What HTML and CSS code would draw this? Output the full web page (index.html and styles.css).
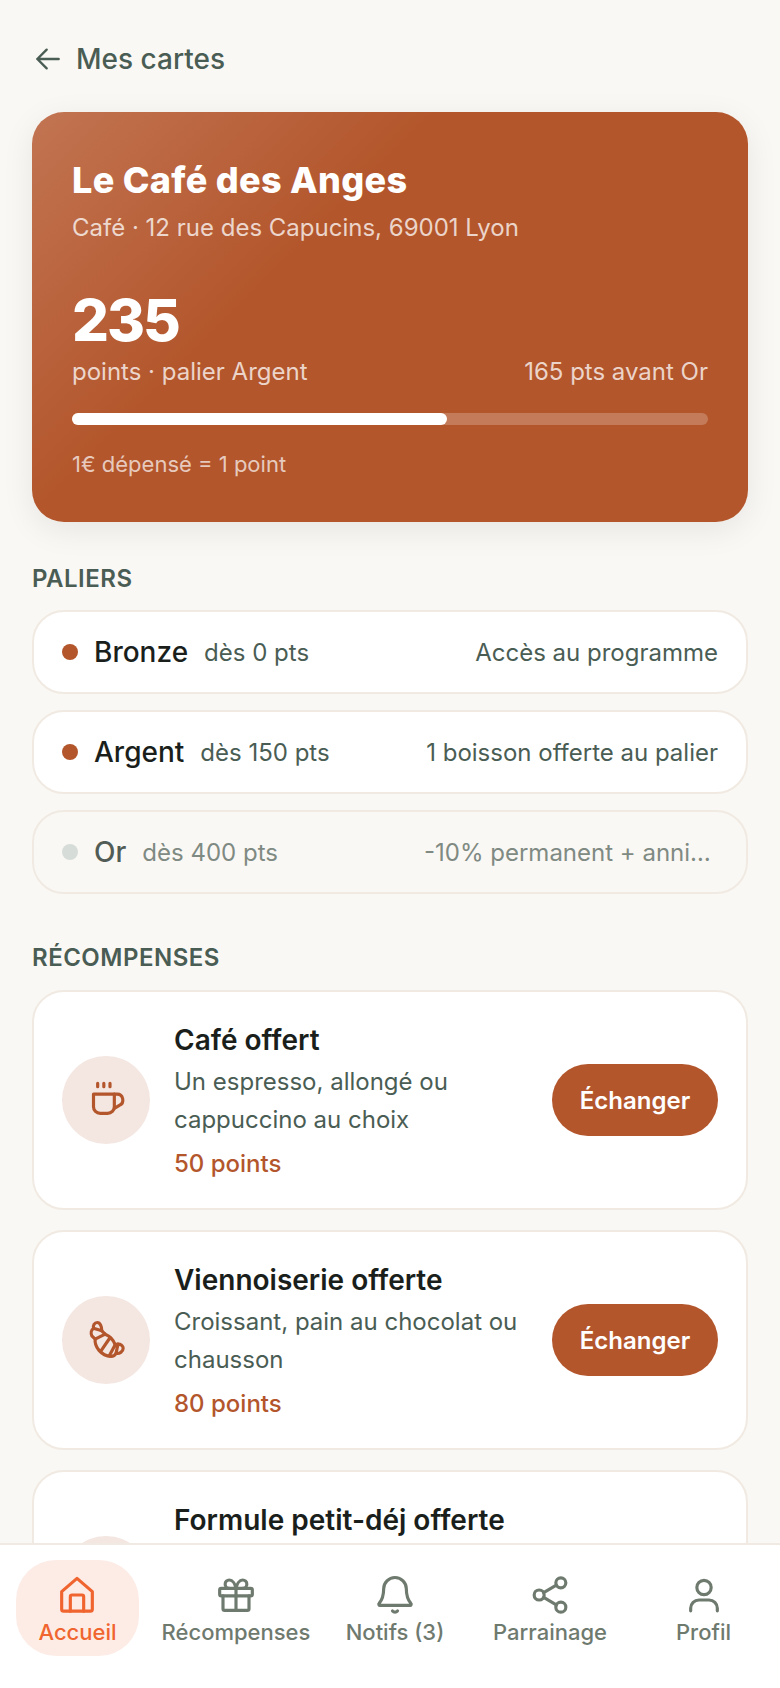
FILE: index.html
```html
<!DOCTYPE html>
<html lang="fr">
<head>
  <meta charset="UTF-8">
  <meta name="viewport" content="width=device-width, initial-scale=1.0">
  <title>Mes cartes</title>
  <link rel="stylesheet" href="styles.css">
</head>
<body>
  <div class="app">
    <main class="content">
      <header class="top-bar">
        <svg class="back-icon" viewBox="0 0 24 24"><path d="M20 12H4M11 5l-7 7 7 7"/></svg>
        <h1>Mes cartes</h1>
      </header>

      <section class="hero">
        <h2>Le Café des Anges</h2>
        <p class="hero-sub">Café · 12 rue des Capucins, 69001 Lyon</p>
        <div class="hero-points">235</div>
        <div class="hero-row">
          <span>points · palier Argent</span>
          <span>165 pts avant Or</span>
        </div>
        <div class="progress"><div class="progress-fill" style="width: 59%"></div></div>
        <p class="hero-rule">1€ dépensé = 1 point</p>
      </section>

      <h3 class="section-title">PALIERS</h3>
      <ul class="tiers">
        <li class="tier">
          <span class="dot"></span>
          <span class="tier-name">Bronze</span>
          <span class="tier-min">dès 0 pts</span>
          <span class="tier-perk">Accès au programme</span>
        </li>
        <li class="tier">
          <span class="dot"></span>
          <span class="tier-name">Argent</span>
          <span class="tier-min">dès 150 pts</span>
          <span class="tier-perk">1 boisson offerte au palier</span>
        </li>
        <li class="tier tier-locked">
          <span class="dot"></span>
          <span class="tier-name">Or</span>
          <span class="tier-min">dès 400 pts</span>
          <span class="tier-perk">-10% permanent + anniversaire</span>
        </li>
      </ul>

      <h3 class="section-title section-title-rewards">RÉCOMPENSES</h3>
      <div class="rewards">
        <article class="reward">
          <div class="reward-icon">
            <svg viewBox="0 0 24 24">
              <path d="M7 2v2M10.7 2v2M14.4 2v2"/>
              <path d="M4.5 8.5H17V16a4 4 0 0 1-4 4H8.5a4 4 0 0 1-4-4Z"/>
              <path d="M17 8.5h1.5a3.5 3.5 0 0 1 1.5 6.7L17 17"/>
            </svg>
          </div>
          <div class="reward-text">
            <h4>Café offert</h4>
            <p>Un espresso, allongé ou cappuccino au choix</p>
            <span class="reward-cost">50 points</span>
          </div>
          <button class="swap-btn">Échanger</button>
        </article>

        <article class="reward">
          <div class="reward-icon">
            <svg viewBox="0 0 24 24">
              <path d="M6.8 1.5C5 1.5 4.2 3.2 4.5 5 3 6 2.8 8 3.5 9.5l2 2C5 16 9 21.5 15 21.8c1.5 0 2.5-.8 3-1.800 2 .5 4.3-1 4.3-3 0-1.500-1.500-2.500-3.100-2.500l-1.700.3c-1-2.800-3.500-5.300-6-6.300l-2-2C9.500 4 8.500 1.500 6.800 1.500Z"/>
              <path d="M4.500 5c1.500.5 3.500 1 5 1.500M5.500 11.500l6-3M9 18.500l5.500-8M14 21.500l3.500-6.700M18 20l1.200-5.500"/>
            </svg>
          </div>
          <div class="reward-text">
            <h4>Viennoiserie offerte</h4>
            <p>Croissant, pain au chocolat ou chausson</p>
            <span class="reward-cost">80 points</span>
          </div>
          <button class="swap-btn">Échanger</button>
        </article>

        <article class="reward">
          <div class="reward-icon"></div>
          <div class="reward-text">
            <h4>Formule petit-déj offerte</h4>
            <p>Boisson chaude, jus et viennoiserie</p>
            <span class="reward-cost">150 points</span>
          </div>
          <button class="swap-btn">Échanger</button>
        </article>
      </div>
    </main>

    <nav class="bottom-nav">
      <a class="nav-item active">
        <svg viewBox="0 0 24 24">
          <path d="M12 2l9.200 8v10.500a1.200 1.200 0 0 1-1.200 1.200H4a1.200 1.200 0 0 1-1.200-1.200V10Z"/>
          <path d="M8 21.700V13a1 1 0 0 1 1-1h6a1 1 0 0 1 1 1v8.700"/>
        </svg>
        <span>Accueil</span>
      </a>
      <a class="nav-item">
        <svg viewBox="0 0 24 24">
          <rect x="2.200" y="8" width="19.600" height="4.500" rx="1"/>
          <path d="M4.200 12.500v7.700a1 1 0 0 0 1 1h13.600a1 1 0 0 0 1-1v-7.700M12 8v13.200"/>
          <path d="M12 8C11.500 5.500 10 3 8 3a2.500 2.500 0 0 0 0 5M12 8c.5-2.500 2-5 4-5a2.500 2.500 0 0 1 0 5"/>
        </svg>
        <span>Récompenses</span>
      </a>
      <a class="nav-item">
        <svg viewBox="0 0 24 24">
          <path d="M12 1.500a6.800 6.800 0 0 0-6.800 6.800c0 4.700-1.200 7-2.700 8.700a.7.7 0 0 0 .6 1.200h17.800a.7.7 0 0 0 .6-1.200c-1.500-1.700-2.700-4-2.700-8.700A6.800 6.800 0 0 0 12 1.500Z"/>
          <path d="M10.500 21.600c.8.900 2.200.9 3 0"/>
        </svg>
        <span>Notifs (3)</span>
      </a>
      <a class="nav-item">
        <svg viewBox="0 0 24 24">
          <circle cx="18.500" cy="4.700" r="3"/>
          <circle cx="5.500" cy="12" r="3"/>
          <circle cx="18.500" cy="19.300" r="3"/>
          <path d="M8.200 10.600l7.600-4.500M8.200 13.400l7.600 4.500"/>
        </svg>
        <span>Parrainage</span>
      </a>
      <a class="nav-item">
        <svg viewBox="0 0 24 24">
          <circle cx="12" cy="7.500" r="4.300"/>
          <path d="M4 21.500V20a5 5 0 0 1 5-5h6a5 5 0 0 1 5 5v1.500"/>
        </svg>
        <span>Profil</span>
      </a>
    </nav>
  </div>
</body>
</html>
```

FILE: styles.css
```css
* {
  margin: 0;
  padding: 0;
  box-sizing: border-box;
}

body {
  font-family: Inter, "Liberation Sans", sans-serif;
  background-color: #faf8f4;
  color: #1a1f1c;
}

svg {
  fill: none;
  stroke: currentColor;
  stroke-width: 1.5;
  stroke-linecap: round;
  stroke-linejoin: round;
}

.app {
  height: 100vh;
  display: flex;
  flex-direction: column;
  overflow: hidden;
}

.content {
  flex: 1;
  min-height: 0;
  overflow: hidden;
  padding: 39px 32px 0;
}

.top-bar {
  display: flex;
  align-items: center;
  gap: 12px;
  height: 40px;
  margin-bottom: 33px;
  color: #4a5d54;
}

.back-icon {
  width: 32px;
  height: 32px;
  stroke-width: 1.8;
}

.top-bar h1 {
  font-size: 28px;
  font-weight: 500;
}

.hero {
  height: 410px;
  padding: 46px 40px 0;
  border-radius: 32px;
  color: #fff;
  background: linear-gradient(135deg, #c27452 0%, #b3562c 36%, #b3562c 100%);
  box-shadow: 0 8px 32px rgba(0, 0, 0, 0.08);
}

.hero h2 {
  font-size: 36px;
  font-weight: 800;
  line-height: 44px;
  letter-spacing: 0.3px;
}

.hero-sub {
  margin-top: 9px;
  font-size: 24px;
  line-height: 34px;
  color: rgba(255, 255, 255, 0.75);
}

.hero-points {
  margin-top: 40px;
  font-size: 58px;
  font-weight: 800;
  line-height: 71px;
  letter-spacing: -2px;
}

.hero-row {
  display: flex;
  justify-content: space-between;
  font-size: 24px;
  line-height: 32px;
  color: rgba(255, 255, 255, 0.75);
}

.progress {
  height: 12px;
  margin-top: 25px;
  border-radius: 6px;
  background-color: rgba(255, 255, 255, 0.22);
}

.progress-fill {
  height: 100%;
  border-radius: 6px;
  background-color: #fff;
}

.hero-rule {
  margin-top: 23px;
  font-size: 22px;
  line-height: 32px;
  color: rgba(255, 255, 255, 0.7);
}

.section-title {
  margin-top: 43px;
  margin-bottom: 17px;
  font-size: 24px;
  font-weight: 600;
  line-height: 28px;
  letter-spacing: 0.5px;
  color: #4a5d54;
}

.section-title-rewards {
  margin-top: 50px;
  margin-bottom: 18px;
}

.tiers {
  list-style: none;
  display: flex;
  flex-direction: column;
  gap: 16px;
}

.tier {
  display: flex;
  align-items: center;
  height: 84px;
  padding: 0 28px;
  background-color: #fff;
  border: 2px solid #f0eae2;
  border-radius: 32px;
}

.dot {
  flex: none;
  width: 16px;
  height: 16px;
  border-radius: 50%;
  background-color: #b3562c;
}

.tier-name {
  margin-left: 16px;
  font-size: 28px;
  font-weight: 500;
}

.tier-min {
  margin-left: 16px;
  font-size: 24px;
  color: #4a5d54;
  white-space: nowrap;
}

.tier-perk {
  max-width: 294px;
  margin-left: auto;
  font-size: 24px;
  text-align: right;
  color: #4a5d54;
  white-space: nowrap;
  overflow: hidden;
  text-overflow: ellipsis;
}

.tier-locked {
  background-color: transparent;
  color: #525c56;
}

.tier-locked .dot {
  background-color: #d6dcd8;
}

.tier-locked .tier-min,
.tier-locked .tier-perk {
  color: #7f8a83;
}

.rewards {
  display: flex;
  flex-direction: column;
  gap: 20px;
}

.reward {
  flex: none;
  display: flex;
  align-items: center;
  height: 220px;
  padding: 0 28px;
  background-color: #fff;
  border: 2px solid #f0eae2;
  border-radius: 32px;
}

.reward-icon {
  flex: none;
  display: flex;
  align-items: center;
  justify-content: center;
  width: 88px;
  height: 88px;
  border-radius: 50%;
  background-color: #f4e6e1;
  color: #b3562c;
}

.reward-icon svg {
  width: 40px;
  height: 40px;
  stroke-width: 1.9;
}

.reward-text {
  flex: 1;
  min-width: 0;
  padding: 4px 24px 0;
}

.reward-text h4 {
  margin-bottom: 5px;
  font-size: 28px;
  font-weight: 600;
  line-height: 36px;
}

.reward-text p {
  font-size: 24px;
  line-height: 38px;
  color: #4a5d54;
}

.reward-cost {
  display: block;
  margin-top: 7px;
  font-size: 24px;
  font-weight: 500;
  line-height: 36px;
  color: #b3562c;
}

.swap-btn {
  flex: none;
  width: 166px;
  height: 72px;
  border: none;
  border-radius: 36px;
  font-family: inherit;
  font-size: 24px;
  font-weight: 600;
  color: #fff;
  background-color: #b3562c;
}

.bottom-nav {
  flex: none;
  display: grid;
  grid-template-columns: 155px 162px 156px 154px 153px;
  height: 145px;
  padding-top: 15px;
  align-items: start;
  background-color: #fff;
  border-top: 2px solid #f0eae2;
}

.nav-item {
  display: flex;
  flex-direction: column;
  align-items: center;
  justify-self: center;
  gap: 3px;
  padding: 15px 22px 0;
  height: 96px;
  border-radius: 40px;
  font-size: 22px;
  font-weight: 500;
  line-height: 28px;
  white-space: nowrap;
  color: #6f7a6f;
}

.nav-item svg {
  flex: none;
  width: 40px;
  height: 40px;
  stroke-width: 1.9;
}

.nav-item.active {
  color: #f0652f;
  background-color: #fdece6;
}
```
